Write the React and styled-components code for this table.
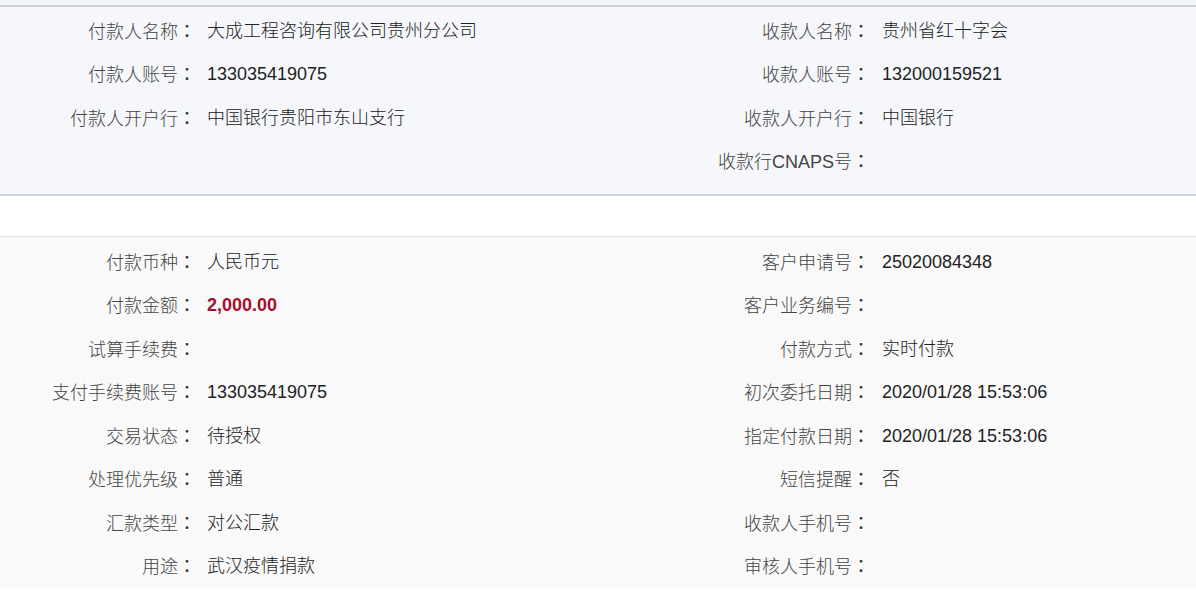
import React from "react";
import styled, { createGlobalStyle } from "styled-components";

const Global = createGlobalStyle`
  html, body { margin: 0; padding: 0; background: #ffffff; }
  body {
    font-family: "Liberation Sans", "Noto Sans CJK SC", sans-serif;
    font-size: 18px;
    color: #333;
  }
`;

const Page = styled.div`
  width: 1196px;
  height: 591px;
  overflow: hidden;
  background: #ffffff;
`;

const TopStrip = styled.div`
  height: 5px;
  background: #f3f7f9;
`;

const Panel = styled.section`
  background: ${(p) => p.$bg};
  border-top: ${(p) => p.$borderTop};
  border-bottom: ${(p) => p.$borderBottom || "none"};
  padding: ${(p) => p.$pad};
`;

const Spacer = styled.div`
  height: ${(p) => p.$h}px;
  background: #ffffff;
`;

const Grid = styled.div`
  display: grid;
  grid-template-columns: 196px 478px 196px 1fr;
  grid-auto-rows: 43.5px;
  align-items: center;
`;

const Label = styled.div`
  text-align: right;
  white-space: nowrap;
  color: #444;
  font-weight: 300;
  line-height: 1;
`;

const Colon = styled.span`
  display: inline-block;
  width: 18px;
  text-align: center;
  font-family: "Noto Sans CJK TC", sans-serif;
  font-weight: 400;
  color: #333;
`;

const Value = styled.div`
  padding-left: ${(p) => p.$pl || 11}px;
  white-space: nowrap;
  line-height: 1;
  color: ${(p) => (p.$amount ? "#a3102e" : "#222")};
  font-weight: ${(p) => (p.$amount ? 700 : 300)};
`;

const top = [
  ["付款人名称", "大成工程咨询有限公司贵州分公司", "收款人名称", "贵州省红十字会"],
  ["付款人账号", "133035419075", "收款人账号", "132000159521"],
  ["付款人开户行", "中国银行贵阳市东山支行", "收款人开户行", "中国银行"],
  ["", "", "收款行CNAPS号", ""],
];

const bottom = [
  ["付款币种", "人民币元", "客户申请号", "25020084348"],
  ["付款金额", "2,000.00", "客户业务编号", ""],
  ["试算手续费", "", "付款方式", "实时付款"],
  ["支付手续费账号", "133035419075", "初次委托日期", "2020/01/28 15:53:06"],
  ["交易状态", "待授权", "指定付款日期", "2020/01/28 15:53:06"],
  ["处理优先级", "普通", "短信提醒", "否"],
  ["汇款类型", "对公汇款", "收款人手机号", ""],
  ["用途", "武汉疫情捐款", "审核人手机号", ""],
];

function FieldLabel({ text }) {
  if (!text) return <Label />;
  return (
    <Label>
      {text}
      <Colon>：</Colon>
    </Label>
  );
}

function Rows({ data }) {
  return (
    <Grid>
      {data.map((r, i) => (
        <React.Fragment key={i}>
          <FieldLabel text={r[0]} />
          <Value $amount={r[0] === "付款金额"}>{r[1]}</Value>
          <FieldLabel text={r[2]} />
          <Value $pl={12}>{r[3]}</Value>
        </React.Fragment>
      ))}
    </Grid>
  );
}

export default function App() {
  return (
    <Page>
      <Global />
      <TopStrip />
      <Panel
        $bg="#f5f7fb"
        $borderTop="2px solid #c9d3dc"
        $borderBottom="2px solid #c9d3dc"
        $pad="2px 0 11px"
      >
        <Rows data={top} />
      </Panel>
      <Spacer $h={40} />
      <Panel $bg="#f9f9f9" $borderTop="1px solid #e2e2e2" $pad="3px 0 0">
        <Rows data={bottom} />
      </Panel>
    </Page>
  );
}
